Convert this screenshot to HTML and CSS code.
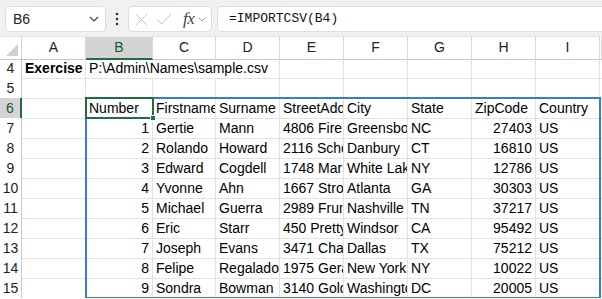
FILE: index.html
```html
<!DOCTYPE html>
<html>
  <head>
    <title>Sheet</title>
    <meta charset="UTF-8" />
    <link rel="stylesheet" href="styles.css">
  </head>

  <body>
    <div class="formulaBar">
      <div class="nameBox">
        <span class="cellRef">B6</span>
        <svg class="nameArrow" width="10" height="6" viewBox="0 0 10 6">
          <path d="M1 1 L5 5 L9 1" fill="none" stroke="#444" stroke-width="1.2" />
        </svg>
      </div>

      <div class="moreDots">
        <svg width="4" height="14" viewBox="0 0 4 14">
          <circle cx="2" cy="2" r="1.3" fill="#333" />
          <circle cx="2" cy="7" r="1.3" fill="#333" />
          <circle cx="2" cy="12" r="1.3" fill="#333" />
        </svg>
      </div>

      <div class="fxBox">
        <svg width="13" height="13" viewBox="0 0 13 13">
          <path d="M1 1 L12 12 M12 1 L1 12" stroke="#c4c4c4" stroke-width="1" fill="none" />
        </svg>
        <svg class="check" width="16" height="12" viewBox="0 0 16 12">
          <path d="M1 6 L5.5 11 L15 1" stroke="#c4c4c4" stroke-width="1" fill="none" />
        </svg>
        <span class="fx">fx</span>
        <svg class="fxArrow" width="8" height="5" viewBox="0 0 8 5">
          <path d="M0.5 0.5 L4 4 L7.5 0.5" fill="none" stroke="#999" stroke-width="1" />
        </svg>
      </div>

      <div class="formulaInput">=IMPORTCSV(B4)</div>
    </div>

    <div class="sheet">
      <div class="row colHeads">
        <div class="corner"></div>
        <div class="head">A</div>
        <div class="head picked">B</div>
        <div class="head">C</div>
        <div class="head">D</div>
        <div class="head">E</div>
        <div class="head">F</div>
        <div class="head">G</div>
        <div class="head">H</div>
        <div class="head">I</div>
        <div class="head"></div>
      </div>

      <div class="row">
        <div class="rowHead">4</div>
        <div class="cell bold">Exercise</div>
        <div class="cell wide3">P:\Admin\Names\sample.csv</div>
        <div class="cell"></div>
        <div class="cell"></div>
        <div class="cell"></div>
        <div class="cell"></div>
        <div class="cell"></div>
        <div class="cell"></div>
      </div>

      <div class="row">
        <div class="rowHead">5</div>
        <div class="cell"></div>
        <div class="cell"></div>
        <div class="cell"></div>
        <div class="cell"></div>
        <div class="cell"></div>
        <div class="cell"></div>
        <div class="cell"></div>
        <div class="cell"></div>
        <div class="cell"></div>
        <div class="cell"></div>
      </div>

      <div class="row">
        <div class="rowHead picked">6</div>
        <div class="cell"></div>
        <div class="cell">Number</div>
        <div class="cell">Firstname</div>
        <div class="cell">Surname</div>
        <div class="cell">StreetAddress</div>
        <div class="cell">City</div>
        <div class="cell">State</div>
        <div class="cell">ZipCode</div>
        <div class="cell">Country</div>
        <div class="cell"></div>
      </div>

      <div class="row">
        <div class="rowHead">7</div>
        <div class="cell"></div>
        <div class="cell num">1</div>
        <div class="cell">Gertie</div>
        <div class="cell">Mann</div>
        <div class="cell">4806 Fire Access Road</div>
        <div class="cell">Greensboro</div>
        <div class="cell">NC</div>
        <div class="cell num">27403</div>
        <div class="cell">US</div>
        <div class="cell"></div>
      </div>

      <div class="row">
        <div class="rowHead">8</div>
        <div class="cell"></div>
        <div class="cell num">2</div>
        <div class="cell">Rolando</div>
        <div class="cell">Howard</div>
        <div class="cell">2116 School Street</div>
        <div class="cell">Danbury</div>
        <div class="cell">CT</div>
        <div class="cell num">16810</div>
        <div class="cell">US</div>
        <div class="cell"></div>
      </div>

      <div class="row">
        <div class="rowHead">9</div>
        <div class="cell"></div>
        <div class="cell num">3</div>
        <div class="cell">Edward</div>
        <div class="cell">Cogdell</div>
        <div class="cell">1748 Marshall Street</div>
        <div class="cell">White Lake</div>
        <div class="cell">NY</div>
        <div class="cell num">12786</div>
        <div class="cell">US</div>
        <div class="cell"></div>
      </div>

      <div class="row">
        <div class="rowHead">10</div>
        <div class="cell"></div>
        <div class="cell num">4</div>
        <div class="cell">Yvonne</div>
        <div class="cell">Ahn</div>
        <div class="cell">1667 Stroop Hill Road</div>
        <div class="cell">Atlanta</div>
        <div class="cell">GA</div>
        <div class="cell num">30303</div>
        <div class="cell">US</div>
        <div class="cell"></div>
      </div>

      <div class="row">
        <div class="rowHead">11</div>
        <div class="cell"></div>
        <div class="cell num">5</div>
        <div class="cell">Michael</div>
        <div class="cell">Guerra</div>
        <div class="cell">2989 Frum Street</div>
        <div class="cell">Nashville</div>
        <div class="cell">TN</div>
        <div class="cell num">37217</div>
        <div class="cell">US</div>
        <div class="cell"></div>
      </div>

      <div class="row">
        <div class="rowHead">12</div>
        <div class="cell"></div>
        <div class="cell num">6</div>
        <div class="cell">Eric</div>
        <div class="cell">Starr</div>
        <div class="cell">450 Pretty View Lane</div>
        <div class="cell">Windsor</div>
        <div class="cell">CA</div>
        <div class="cell num">95492</div>
        <div class="cell">US</div>
        <div class="cell"></div>
      </div>

      <div class="row">
        <div class="rowHead">13</div>
        <div class="cell"></div>
        <div class="cell num">7</div>
        <div class="cell">Joseph</div>
        <div class="cell">Evans</div>
        <div class="cell">3471 Charles Street</div>
        <div class="cell">Dallas</div>
        <div class="cell">TX</div>
        <div class="cell num">75212</div>
        <div class="cell">US</div>
        <div class="cell"></div>
      </div>

      <div class="row">
        <div class="rowHead">14</div>
        <div class="cell"></div>
        <div class="cell num">8</div>
        <div class="cell">Felipe</div>
        <div class="cell">Regalado</div>
        <div class="cell">1975 Geraldine Lane</div>
        <div class="cell">New York</div>
        <div class="cell">NY</div>
        <div class="cell num">10022</div>
        <div class="cell">US</div>
        <div class="cell"></div>
      </div>

      <div class="row">
        <div class="rowHead">15</div>
        <div class="cell"></div>
        <div class="cell num">9</div>
        <div class="cell">Sondra</div>
        <div class="cell">Bowman</div>
        <div class="cell">3140 Golden Street</div>
        <div class="cell">Washington</div>
        <div class="cell">DC</div>
        <div class="cell num">20005</div>
        <div class="cell">US</div>
        <div class="cell"></div>
      </div>

      <div class="tableEdge"></div>
      <div class="selection"><span class="handle"></span></div>
    </div>
  </body>
</html>
```

FILE: styles.css
```css
html * {
  margin: 0;
  padding: 0;
  box-sizing: border-box;
}

body {
  font-family: "Liberation Sans", Arial, sans-serif;
  font-size: 14px;
  color: #000;
  background: #fff;
  overflow: hidden;
}

/* formula bar */

.formulaBar {
  height: 36px;
  background: #f1f1f1;
  display: flex;
  align-items: flex-start;
  padding: 6px 0 0 5px;
}

.nameBox {
  width: 101px;
  height: 26px;
  background: #fff;
  border: 1px solid #dedede;
  border-radius: 4px;
  display: flex;
  align-items: center;
  justify-content: space-between;
  padding: 0 6px 0 7px;
  font-size: 14px;
  color: #222;
}

.moreDots {
  width: 22px;
  height: 26px;
  display: flex;
  align-items: center;
  justify-content: center;
}

.fxBox {
  width: 84px;
  height: 26px;
  background: #fff;
  border: 1px solid #dedede;
  border-radius: 4px;
  display: flex;
  align-items: center;
  padding-left: 6px;
}

.fxBox .check {
  margin-left: 8px;
}

.fx {
  font-family: "Liberation Serif", serif;
  font-style: italic;
  font-size: 17px;
  color: #444;
  margin-left: 11px;
  letter-spacing: -0.5px;
}

.fxArrow {
  margin-left: 4px;
}

.formulaInput {
  flex: 1;
  height: 26px;
  margin-left: 5px;
  margin-right: -6px;
  background: #fff;
  border: 1px solid #dedede;
  border-radius: 4px;
  font-family: "Liberation Mono", monospace;
  font-size: 13px;
  line-height: 24px;
  padding-left: 11px;
  color: #111;
}

/* grid */

.sheet {
  position: relative;
}

.row {
  display: grid;
  grid-template-columns: 22px 64px 67px 63px 64px 64px 64px 64px 64px 64px 1fr;
  height: 20px;
}

.colHeads {
  height: 22px;
  border-top: 1px solid #e6e6e6;
}

.corner {
  position: relative;
  background: #fff;
  border-right: 1px solid #d4d4d4;
  border-bottom: 1px solid #c8c8c8;
}

.corner::after {
  content: "";
  position: absolute;
  right: 3px;
  bottom: 3px;
  border-left: 12px solid transparent;
  border-bottom: 12px solid #d0d0d0;
}

.head {
  background: #fff;
  border-right: 1px solid #d8d8d8;
  border-bottom: 1px solid #c8c8c8;
  text-align: center;
  line-height: 21px;
  color: #222;
}

.head.picked {
  background: #d4d4d4;
  border-bottom: 2px solid #1e6e3f;
  color: #0f5a2c;
}

.rowHead {
  background: #fff;
  border-right: 1px solid #c8c8c8;
  border-bottom: 1px solid #dadada;
  text-align: center;
  line-height: 20px;
  color: #222;
}

.rowHead.picked {
  background: #d4d4d4;
  border-right: 2px solid #1e6e3f;
  color: #0f5a2c;
}

.cell {
  border-right: 1px solid #e2e2e2;
  border-bottom: 1px solid #e2e2e2;
  padding: 0 3px;
  line-height: 20px;
  white-space: nowrap;
  overflow: hidden;
}

.cell.num {
  text-align: right;
}

.cell.bold {
  font-weight: bold;
}

.cell.wide3 {
  grid-column: span 3;
  overflow: visible;
}

.tableEdge {
  position: absolute;
  left: 85px;
  top: 61px;
  width: 516px;
  height: 202px;
  border: 2px solid #3a78d6;
  pointer-events: none;
}

.selection {
  position: absolute;
  left: 85px;
  top: 61px;
  width: 69px;
  height: 22px;
  border: 2px solid #1e6e3f;
}

.handle {
  position: absolute;
  right: -4px;
  bottom: -4px;
  width: 6px;
  height: 6px;
  background: #1e6e3f;
  border: 1px solid #fff;
}
```
